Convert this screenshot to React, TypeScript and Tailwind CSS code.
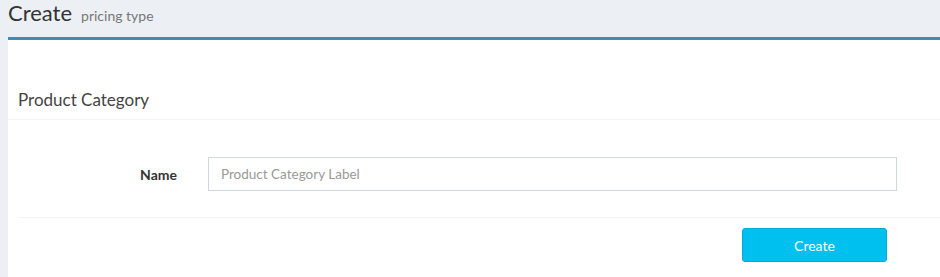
export default function App() {
  return (
    <div
      className="min-h-[277px] w-[940px] overflow-hidden bg-[#ecf0f5] text-[#333]"
      style={{ fontFamily: 'Lato, "Open Sans", sans-serif' }}
    >
      <div className="flex h-[37px] items-baseline gap-[9px] pl-[8px]">
        <h1 className="text-[22px] leading-[26px] text-[#333]">Create</h1>
        <small className="text-[14px] text-[#777]">pricing type</small>
      </div>

      <div className="ml-[8px] border-t-[3px] border-[#3c8dbc] bg-white">
        <div className="h-[40px]" />
        <div className="flex h-[40px] items-center border-b border-[#f4f4f4] px-[10px]">
          <h3 className="text-[17px] leading-[20px] text-[#444]">Product Category</h3>
        </div>

        <div className="pl-[10px] pt-[37px]">
          <div className="flex items-center">
            <label className="w-[159px] text-right text-[14px] font-bold text-[#333]">
              Name
            </label>
            <input
              type="text"
              placeholder="Product Category Label"
              className="ml-[31px] h-[34px] w-[689px] border border-[#d2d6de] px-[12px] text-[13.5px] text-[#555] placeholder:text-[#999] focus:outline-none"
            />
          </div>

          <div className="mt-[26px] border-t border-[#f4f4f4]" />

          <div className="flex pl-[724px] pt-[10px] pb-[15px]">
            <button className="h-[34px] w-[145px] rounded-[3px] border border-[#00acd6] bg-[#00c0ef] text-[14px] text-white">
              Create
            </button>
          </div>
        </div>
      </div>
    </div>
  )
}
